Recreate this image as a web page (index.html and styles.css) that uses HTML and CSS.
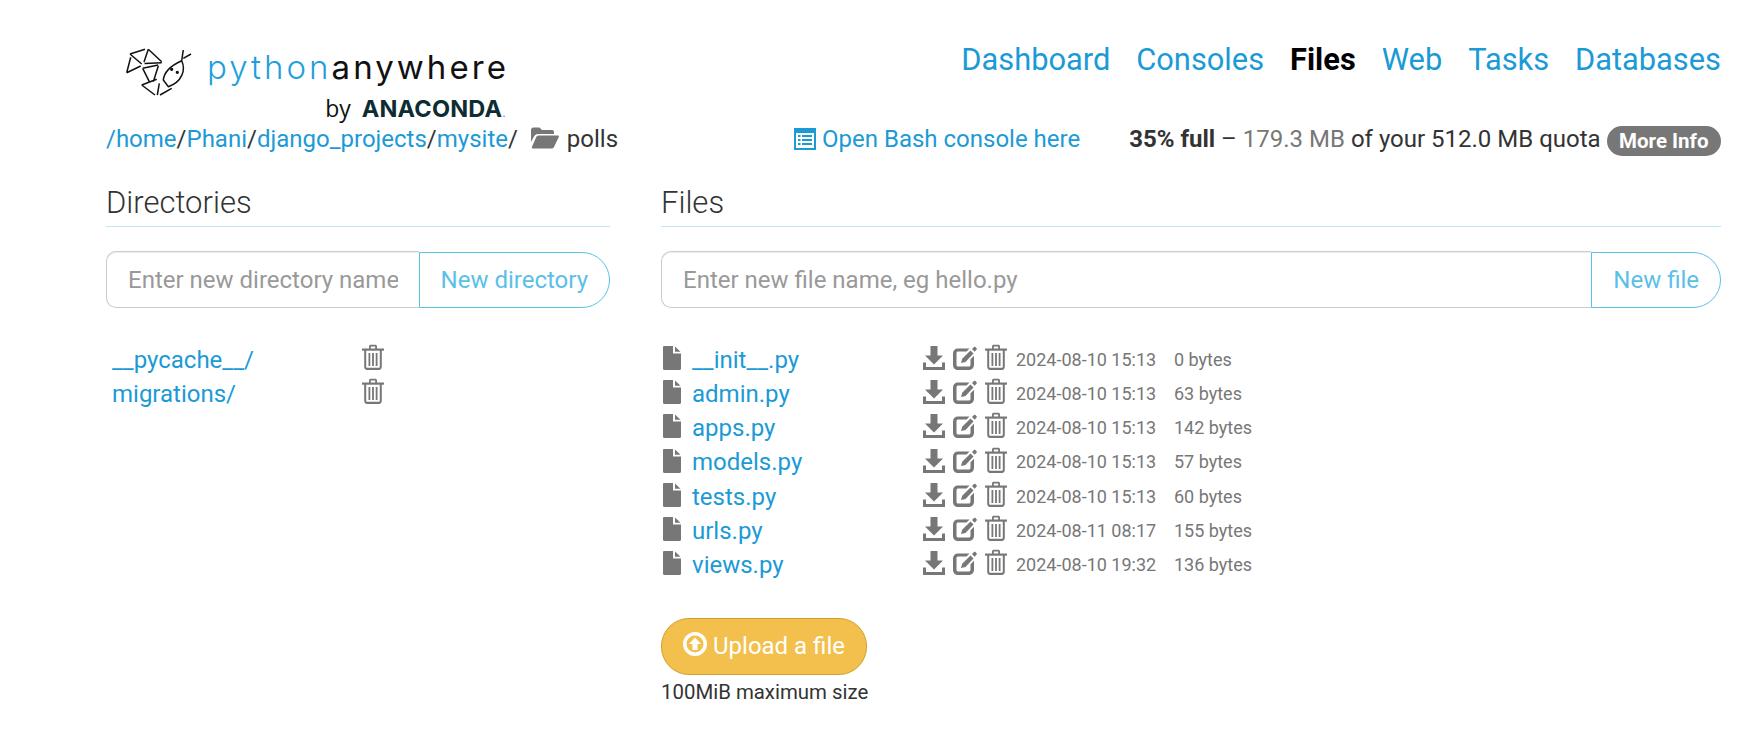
FILE: index.html
```html
<!DOCTYPE html>
<html lang="en">
<head>
<meta charset="utf-8">
<title>Files</title>
<link rel="stylesheet" href="styles.css">
</head>
<body>
<svg class="defs" width="0" height="0" aria-hidden="true">
  <symbol id="i-file" viewBox="0 0 18 24"><path d="M0 1.200C0 .5.500 0 1.200 0H10v7.500h8v15.300c0 .7-.5 1.200-1.200 1.200H1.200C.5 24 0 23.500 0 22.800Z"/><path d="M12 .6 17.500 5.800H12Z"/></symbol>
  <symbol id="i-trash" viewBox="0 0 22 26"><path d="M0 4.500h22v2.200H0Z"/><path d="M7 5V2.500C7 1.400 7.800.8 8.800.8h4.400c1 0 1.800.6 1.800 1.700V5h-1.800V2.600H8.800V5Z"/><path d="M2.200 6h2v16.500c0 .8.400 1.300 1 1.300h11.600c.6 0 1-.5 1-1.300V6h2v16.800c0 1.700-1.100 3.200-2.800 3.200H5c-1.700 0-2.800-1.500-2.800-3.200Z"/><path d="M6.500 9h1.800v13H6.500ZM10.100 9h1.800v13h-1.800ZM13.700 9h1.800v13h-1.800Z"/></symbol>
  <symbol id="i-down" viewBox="0 0 22 24"><path d="M7.500 0h7v9.500H20L11 18.500 2 9.500h5.500Z"/><path d="M0 16.500h3v4.500h16v-4.500h3V24H0Z"/></symbol>
  <symbol id="i-edit" viewBox="0 0 24 24"><path d="M5 2.500H16.500L13.600 5.500H5.500C4.100 5.500 3.500 6.100 3.500 7.500v11c0 1.400.6 2 2 2h10c1.400 0 2-.6 2-2v-5.300l3.500-3.500v8.800c0 3.400-2.100 5.500-5.500 5.500H5C1.900 24 0 21.900 0 18.500v-11C0 4.500 1.900 2.500 5 2.500Z"/><path d="M17.500 4.500 20.500 7.500 12.500 16 8 17 9.200 12.700Z"/><path d="M19 3 21 1c.4-.4 1-.4 1.400 0l1.200 1.200c.4.4.4 1 0 1.400L21.700 5.800Z"/></symbol>
</svg>

<header class="top">
  <div class="logo">
    <div class="logo-main">
      <svg class="logo-mark" viewBox="0 0 72 60" fill="none" stroke="#111" stroke-width="1.500" aria-hidden="true">
        <path d="M10 14 25 9.300M10 14 21.700 24M6.700 32.700 10.700 17.300M6.700 32.700 20.700 26M28.300 9.300 41.700 21.700M28.300 9.300 24 22M24.500 23.500 41.700 22.700M22.700 28.300 38.300 25M22.700 28.300 29.300 41.700M38.300 26 33.300 41.700M21.700 45 36.700 39.300M21.700 45 35 55M37.300 55 39.300 43.300M40 55 51.700 48.300"/>
        <path d="M43.300 40C44 32 50 26 61.700 20.700C66 30 62 42 48.300 46.700ZM61.700 20.700 63.300 10M63.300 18.300 71 14"/>
        <circle cx="51.700" cy="29.300" r=".9" fill="#111"/><circle cx="57.300" cy="32.300" r=".9" fill="#111"/>
      </svg>
      <span class="logo-python">python</span><span class="logo-any">anywhere</span>
    </div>
    <div class="logo-by"><span class="by">by</span><span class="ana">ANACONDA</span><span class="dot">.</span></div>
  </div>
  <nav class="nav">
    <a href="#">Dashboard</a>
    <a href="#">Consoles</a>
    <a href="#" class="active">Files</a>
    <a href="#">Web</a>
    <a href="#">Tasks</a>
    <a href="#">Databases</a>
  </nav>
</header>

<section class="pathbar">
  <div class="crumbs"><a href="#">/home</a>/<a href="#">Phani</a>/<a href="#">django_projects</a>/<a href="#">mysite</a>/<svg class="folder" viewBox="0 0 28 22" aria-hidden="true"><path d="M0 3C0 1.500 1 .5 2.500.5h6L11 3h10c1.300 0 2 .8 2 2v2H7C5 7 4 8 3 9.500L0 15Z"/><path d="M7.500 8.500H27c.8 0 1.200.7.800 1.400L23 20c-.4.8-1.200 1.500-2.300 1.500H2c-1 0-1.500-.8-1-1.700L5 10.500c.5-1.200 1.300-2 2.500-2Z"/></svg><span class="here">polls</span></div>
  <a href="#" class="bash">
    <svg class="bash-icon" viewBox="0 0 22 22" aria-hidden="true"><path fill-rule="evenodd" d="M0 0h22v22H0ZM2 5v15h18V5Z"/><path d="M4 7h2.500v2H4ZM8 7h10v2H8ZM4 11h2.500v2H4ZM8 11h10v2H8ZM4 15h2.500v2H4ZM8 15h10v2H8Z"/></svg>
    Open Bash console here
  </a>
  <div class="quota"><b>35% full</b> – <span class="used">179.3 MB</span> of your 512.0 MB quota <a href="#" class="more">More Info</a></div>
</section>

<main class="columns">
  <section class="col-dirs">
    <h2 class="section-title">Directories</h2>
    <form class="new-item">
      <input class="name-input" type="text" placeholder="Enter new directory name">
      <button class="add-btn" type="button">New directory</button>
    </form>
    <ul class="dir-list">
      <li class="dir-row"><a href="#" class="dir-name">__pycache__/</a><svg class="ic trash"><use href="#i-trash"/></svg></li>
      <li class="dir-row"><a href="#" class="dir-name">migrations/</a><svg class="ic trash"><use href="#i-trash"/></svg></li>
    </ul>
  </section>

  <section class="col-files">
    <h2 class="section-title">Files</h2>
    <form class="new-item">
      <input class="name-input" type="text" placeholder="Enter new file name, eg hello.py">
      <button class="add-btn" type="button">New file</button>
    </form>
    <ul class="file-list">
      <li class="file-row"><svg class="ic file"><use href="#i-file"/></svg><a href="#" class="file-name">__init__.py</a><span class="actions"><svg class="ic down"><use href="#i-down"/></svg><svg class="ic edit"><use href="#i-edit"/></svg><svg class="ic trash"><use href="#i-trash"/></svg></span><span class="date">2024-08-10 15:13</span><span class="size">0 bytes</span></li>
      <li class="file-row"><svg class="ic file"><use href="#i-file"/></svg><a href="#" class="file-name">admin.py</a><span class="actions"><svg class="ic down"><use href="#i-down"/></svg><svg class="ic edit"><use href="#i-edit"/></svg><svg class="ic trash"><use href="#i-trash"/></svg></span><span class="date">2024-08-10 15:13</span><span class="size">63 bytes</span></li>
      <li class="file-row"><svg class="ic file"><use href="#i-file"/></svg><a href="#" class="file-name">apps.py</a><span class="actions"><svg class="ic down"><use href="#i-down"/></svg><svg class="ic edit"><use href="#i-edit"/></svg><svg class="ic trash"><use href="#i-trash"/></svg></span><span class="date">2024-08-10 15:13</span><span class="size">142 bytes</span></li>
      <li class="file-row"><svg class="ic file"><use href="#i-file"/></svg><a href="#" class="file-name">models.py</a><span class="actions"><svg class="ic down"><use href="#i-down"/></svg><svg class="ic edit"><use href="#i-edit"/></svg><svg class="ic trash"><use href="#i-trash"/></svg></span><span class="date">2024-08-10 15:13</span><span class="size">57 bytes</span></li>
      <li class="file-row"><svg class="ic file"><use href="#i-file"/></svg><a href="#" class="file-name">tests.py</a><span class="actions"><svg class="ic down"><use href="#i-down"/></svg><svg class="ic edit"><use href="#i-edit"/></svg><svg class="ic trash"><use href="#i-trash"/></svg></span><span class="date">2024-08-10 15:13</span><span class="size">60 bytes</span></li>
      <li class="file-row"><svg class="ic file"><use href="#i-file"/></svg><a href="#" class="file-name">urls.py</a><span class="actions"><svg class="ic down"><use href="#i-down"/></svg><svg class="ic edit"><use href="#i-edit"/></svg><svg class="ic trash"><use href="#i-trash"/></svg></span><span class="date">2024-08-11 08:17</span><span class="size">155 bytes</span></li>
      <li class="file-row"><svg class="ic file"><use href="#i-file"/></svg><a href="#" class="file-name">views.py</a><span class="actions"><svg class="ic down"><use href="#i-down"/></svg><svg class="ic edit"><use href="#i-edit"/></svg><svg class="ic trash"><use href="#i-trash"/></svg></span><span class="date">2024-08-10 19:32</span><span class="size">136 bytes</span></li>
    </ul>
    <button class="upload" type="button">
      <svg class="upload-icon" viewBox="0 0 24 24" aria-hidden="true"><path fill-rule="evenodd" d="M12 0a12 12 0 1 0 0 24a12 12 0 1 0 0-24ZM12 3.500a8.500 8.500 0 1 1 0 17a8.500 8.500 0 1 1 0-17Z"/><path d="M12 5.500 18 12h-3.500v6h-5v-6H6Z"/></svg>
      Upload a file
    </button>
    <p class="limit">100MiB maximum size</p>
  </section>
</main>
</body>
</html>
```
FILE: styles.css
```css
* { box-sizing: border-box; }
html, body { margin: 0; background: #fff; }
body {
  width: 1751px;
  height: 732px;
  overflow: hidden;
  padding: 0 30px 0 106px;
  font-family: Roboto, sans-serif;
  font-size: 24px;
  line-height: 34.3px;
  color: #333;
}
a { color: #1b9ad6; text-decoration: none; }
.defs { position: absolute; }

.top { display: flex; justify-content: space-between; height: 122px; }
.logo { width: 400px; padding: 42px 0 0 14px; }
.logo-main { display: flex; align-items: flex-start; height: 50px; }
.logo-mark { width: 72px; height: 60px; margin: -2px 15px 0 0; flex: none; }
.logo-python, .logo-any {
  font-family: Inter, sans-serif;
  font-weight: 300;
  font-size: 33px;
  letter-spacing: 3.050px;
  line-height: 50px;
}
.logo-python { color: #1f9fdc; }
.logo-any { color: #111; font-weight: 400; }
.logo-by { display: flex; align-items: baseline; justify-content: flex-end; margin-top: 1px; line-height: 30px; height: 30px; }
.by { font-family: "Open Sans", sans-serif; font-size: 23px; color: #111; margin-right: 11px; }
.ana { font-family: Inter, sans-serif; font-weight: 700; font-size: 23.500px; letter-spacing: .2px; color: #0d2c33; }
.dot { font-size: 14px; color: #888; }

.nav { display: flex; gap: 26px; padding-top: 40px; font-size: 30.800px; line-height: 40px; }
.nav .active { color: #000; font-weight: 700; }

.pathbar { display: flex; align-items: center; height: 34px; }
.crumbs { white-space: nowrap; width: 688px; flex: none; }
.folder { width: 28px; height: 22px; fill: #777; margin: 0 8px 0 13px; vertical-align: -2px; }
.here { color: #333; }
.bash { display: flex; align-items: center; gap: 6px; flex: none; }
.bash-icon { width: 22px; height: 22px; fill: #1b9ad6; }
.quota { flex: none; white-space: pre; margin-left: auto; }
.used { color: #777; }
.more {
  display: inline-block;
  background: #777;
  color: #fff;
  font-size: 20.500px;
  font-weight: 700;
  line-height: 30px;
  height: 30px;
  padding: 0 12.500px;
  border-radius: 15px;
  vertical-align: -1px;
}

.columns { display: flex; gap: 51px; padding-top: 25px; }
.col-dirs { width: 504px; flex: none; }
.col-files { flex: 1; min-width: 0; }
.section-title {
  margin: 0 0 24px;
  font-weight: 300;
  font-size: 31px;
  line-height: 44px;
  height: 46px;
  color: #333;
  border-bottom: 1px solid #bde6f7;
}
.new-item { display: flex; height: 57px; margin-bottom: 34.500px; }
.name-input {
  flex: 1;
  min-width: 0;
  height: 57px;
  padding: 0 21px;
  border: 1px solid #ccc;
  border-right: 0;
  border-radius: 10px 0 0 10px;
  box-shadow: inset 0 1px 1px rgba(0,0,0,.075);
  font: 24px Roboto, sans-serif;
  outline: 0;
}
.name-input::placeholder { color: #999; opacity: 1; }
.add-btn {
  flex: none;
  align-self: flex-end;
  height: 56px;
  padding: 0 21px;
  background: #fff;
  border: 1px solid #5bc0e8;
  border-radius: 0 28px 28px 0;
  color: #5bc0e8;
  font: 24px Roboto, sans-serif;
}

.dir-list, .file-list { list-style: none; margin: 0; padding: 0; }
.dir-row { display: flex; height: 34.3px; align-items: center; }
.dir-name { width: 250px; margin-left: 6px; }
.ic { fill: #777; flex: none; }
.trash { width: 22px; height: 26px; margin-top: -6px; }
.file-row { display: flex; height: 34.3px; align-items: center; }
.file { width: 18px; height: 24px; margin: -4px 0 0 2px; }
.file-name { width: 231px; margin-left: 11px; flex: none; }
.actions { display: flex; align-items: center; gap: 8px; width: 93px; flex: none; }
.down { width: 22px; height: 24px; margin-top: -4px; }
.edit { width: 24px; height: 24px; margin-top: -4px; }
.actions .trash { margin-top: -6px; }
.date, .size { font-size: 18px; color: #777; }
.date { width: 158px; flex: none; }

.upload {
  display: flex;
  align-items: center;
  gap: 6px;
  margin-top: 35px;
  height: 57px;
  padding: 0 21px;
  background: #f3c04e;
  border: 1px solid #d29f2a;
  border-radius: 28px;
  color: #fff;
  font: 24px Roboto, sans-serif;
}
.upload-icon { width: 24px; height: 24px; fill: #fff; margin-top: -4px; }
.limit { margin: 2px 0 0; font-size: 20.400px; line-height: 30px; color: #333; }
```
